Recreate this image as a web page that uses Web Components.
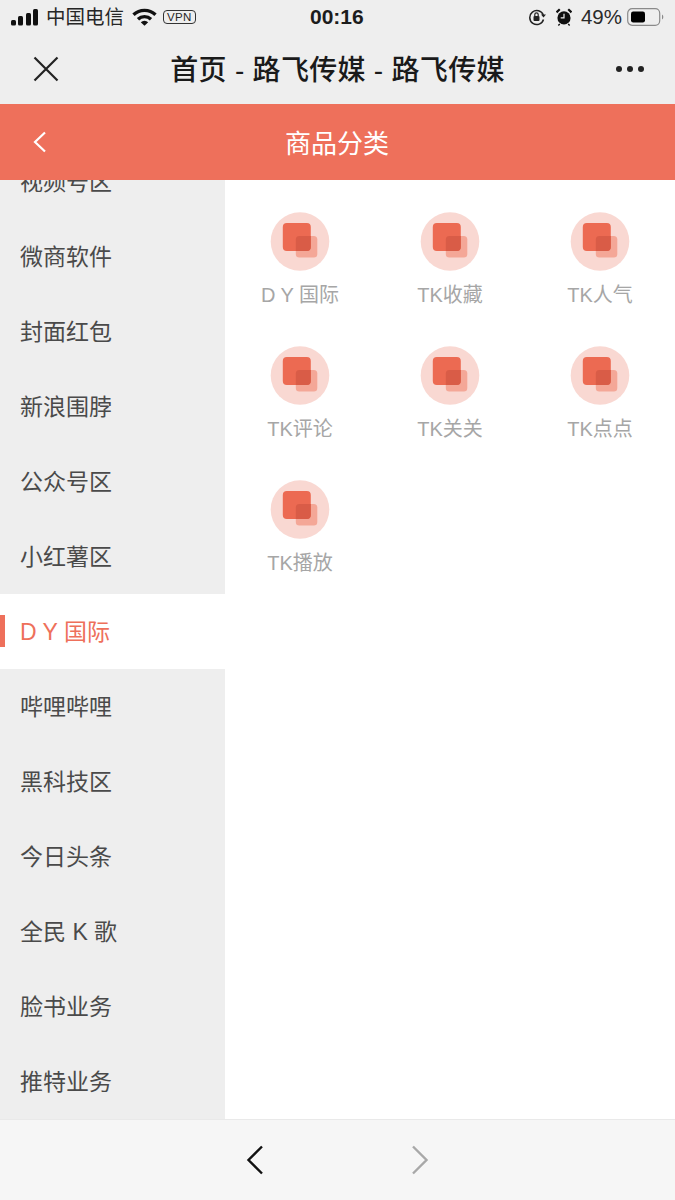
<!DOCTYPE html>
<html lang="zh">
<head>
<meta charset="utf-8">
<title>商品分类</title>
<style>
html, body { margin: 0; padding: 0; height: 100%; }
body { font-family: "Liberation Sans", "Noto Sans CJK SC", sans-serif; background: #fff; overflow: hidden; }
</style>
</head>
<body>
<app-page></app-page>

<script>
class StatusBar extends HTMLElement {
    constructor() {
        super();
        this.attachShadow({mode: 'open'}).innerHTML = `
        <style>
        :host { display: flex; align-items: center; height: 34px; background: #eeeeee; color: #262626; position: relative; font-size: 19.5px; }
        .left { display: flex; align-items: center; padding-left: 11px; flex: 1; }
        .carrier { margin: 0 0 3px 8px; }
        .wifi { margin-left: 8px; }
        .vpn { margin-left: 6px; font-size: 11.5px; line-height: 12px; border: 1px solid #333; border-radius: 4px; padding: 0 3px; height: 12px; letter-spacing: .3px; }
        .time { position: absolute; left: 310px; top: 3px; font-size: 21px; line-height: 28px; font-weight: 700; color: #1c1c1c; }
        .right { display: flex; align-items: center; padding-right: 11px; }
        .pct { font-size: 20.5px; margin: 0 5px 0 9px; color: #2a2a2a; }
        .alarm { margin-left: 10px; }
        </style>
        <div class="left">
            <svg width="27" height="17" viewBox="0 0 27 17"><rect x="0" y="11" width="5" height="5.5" rx="1.5" fill="#111"/><rect x="7" y="7" width="5" height="9.5" rx="1.5" fill="#111"/><rect x="15" y="4" width="5" height="12.5" rx="1.5" fill="#111"/><rect x="22" y="0" width="5" height="16.5" rx="1.5" fill="#111"/></svg>
            <span class="carrier">中国电信</span>
            <svg class="wifi" width="25" height="18" viewBox="0 0 25 18"><path d="M1.5 6.8a16 16 0 0 1 22 0" fill="none" stroke="#111" stroke-width="3.4"/><path d="M6 11.2a9.5 9.5 0 0 1 13 0" fill="none" stroke="#111" stroke-width="3.4"/><path d="M8.8 14.2a5.2 5.2 0 0 1 7.4 0L12.5 17.8z" fill="#111"/></svg>
            <span class="vpn">VPN</span>
        </div>
        <span class="time">00:16</span>
        <div class="right">
            <svg width="18" height="18" viewBox="0 0 18 18"><path d="M15.3 7A7 7 0 1 0 15.5 11.5" fill="none" stroke="#222" stroke-width="1.5"/><path d="M13 6.5h5l-2.5 3z" fill="#222"/><rect x="5.5" y="8" width="6" height="5" rx="1" fill="#222"/><path d="M6.8 8V6.6a1.7 1.7 0 0 1 3.4 0V8" fill="none" stroke="#222" stroke-width="1.2"/></svg>
            <svg class="alarm" width="16" height="18" viewBox="0 0 17 18"><circle cx="8.5" cy="10" r="7" fill="#111"/><path d="M8.5 5.5V10H5" fill="none" stroke="#eee" stroke-width="1.3"/><path d="M0.5 4L4 .8M16.5 4L13 .8" stroke="#111" stroke-width="2.4"/><path d="M4 16.5l-1.5 1.5M13 16.5l1.5 1.5" stroke="#111" stroke-width="1.5"/></svg>
            <span class="pct">49%</span>
            <svg width="37" height="18" viewBox="0 0 37 18"><rect x=".7" y=".7" width="32" height="16.6" rx="4.5" fill="none" stroke="#8a8a8a" stroke-width="1.2"/><rect x="4" y="3.5" width="14" height="11" rx="2.2" fill="#000"/><path d="M35 6.5a3 3 0 0 1 0 5z" fill="#8a8a8a"/></svg>
        </div>`;
    }
}

class NavBar extends HTMLElement {
    constructor() {
        super();
        this.attachShadow({mode: 'open'}).innerHTML = `
        <style>
        :host { display: grid; grid-template-columns: 92px 1fr 92px; align-items: center; height: 70px; background: #eeeeee; }
        .close { padding-left: 33px; display: flex; }
        .title { text-align: center; font-size: 28px; font-weight: 500; color: #1a1a1a; white-space: nowrap; letter-spacing: .3px; padding-bottom: 3px; }
        .more { display: flex; justify-content: flex-end; padding-right: 30px; }
        </style>
        <div class="close"><svg width="26" height="26" viewBox="0 0 26 26"><path d="M1.5 1.5l23 23M24.5 1.5l-23 23" stroke="#222" stroke-width="2.2" fill="none"/></svg></div>
        <div class="title"><slot></slot></div>
        <div class="more"><svg width="30" height="8" viewBox="0 0 30 8"><circle cx="4" cy="4" r="3" fill="#222"/><circle cx="15" cy="4" r="3" fill="#222"/><circle cx="26" cy="4" r="3" fill="#222"/></svg></div>`;
    }
}

class PageHeader extends HTMLElement {
    constructor() {
        super();
        this.attachShadow({mode: 'open'}).innerHTML = `
        <style>
        :host { display: grid; grid-template-columns: 80px 1fr 80px; align-items: center; height: 76px; background: #ee705b; color: #fff; font-size: 26px; position: relative; z-index: 2; }
        .back { padding-left: 33px; display: flex; }
        .title { text-align: center; padding: 0 1px 2px 0; }
        </style>
        <div class="back"><svg width="14" height="22" viewBox="0 0 14 22"><path d="M12 1.5L2 11l10 9.5" fill="none" stroke="#fff" stroke-width="2.2"/></svg></div>
        <div class="title"><slot></slot></div>`;
    }
}

class SideItem extends HTMLElement {
    constructor() {
        super();
        this.attachShadow({mode: 'open'}).innerHTML = `
        <style>
        :host { display: flex; align-items: center; height: 75px; padding: 0 0 4px 20px; font-size: 23px; color: #4a4a4a; white-space: pre; position: relative; box-sizing: border-box; }
        :host([active]) { background: #fff; color: #ee705b; }
        :host([active])::before { content: ""; position: absolute; left: 0; top: 21px; width: 5px; height: 32px; background: #ee705b; }
        </style>
        <slot></slot>`;
    }
}

class SideMenu extends HTMLElement {
    constructor() {
        super();
        this.attachShadow({mode: 'open'}).innerHTML = `
        <style>
        :host { display: block; width: 225px; background: #eeeeee; overflow: hidden; }
        .list { margin-top: -36px; }
        </style>
        <div class="list"><slot></slot></div>`;
    }
}

class CategoryCell extends HTMLElement {
    constructor() {
        super();
        this.attachShadow({mode: 'open'}).innerHTML = `
        <style>
        :host { display: flex; flex-direction: column; align-items: center; height: 134px; font-size: 20px; color: #a6a6a6; white-space: pre; }
        .ball { width: 60px; height: 60px; display: block; }
        .name { margin-top: 8px; line-height: 30px; }
        </style>
        <svg class="ball" viewBox="0 0 60 60">
            <circle cx="30" cy="29.5" r="29.3" fill="#f9d8d2"/>
            <rect x="25.8" y="24" width="21.5" height="21.5" rx="3.5" fill="#f4a797"/>
            <rect x="12.8" y="11" width="28" height="28" rx="4" fill="#ec6a52"/>
            <path d="M29.3 24H40.8V35a4 4 0 0 1-4 4H25.8V27.5a3.5 3.5 0 0 1 3.5-3.5z" fill="#d95c47"/>
        </svg>
        <span class="name"><slot></slot></span>`;
    }
}

class CategoryGrid extends HTMLElement {
    constructor() {
        super();
        this.attachShadow({mode: 'open'}).innerHTML = `
        <style>
        :host { display: grid; grid-template-columns: repeat(3, 150px); grid-auto-rows: 134px; align-content: start; flex: 1; background: #fff; padding-top: 32px; box-sizing: border-box; }
        </style>
        <slot></slot>`;
    }
}

class BottomBar extends HTMLElement {
    constructor() {
        super();
        this.attachShadow({mode: 'open'}).innerHTML = `
        <style>
        :host { display: flex; justify-content: center; align-items: center; gap: 147px; height: 81px; background: #f6f6f6; border-top: 1px solid #e9e9e9; box-sizing: border-box; }
        svg { display: block; }
        </style>
        <svg width="18" height="30" viewBox="0 0 18 30"><path d="M16 1.5L2.5 15 16 28.5" fill="none" stroke="#111" stroke-width="2.4"/></svg>
        <svg width="18" height="30" viewBox="0 0 18 30"><path d="M2 1.5L15.5 15 2 28.5" fill="none" stroke="#a8a8a8" stroke-width="2.4"/></svg>`;
    }
}

class AppPage extends HTMLElement {
    constructor() {
        super();
        this.attachShadow({mode: 'open'}).innerHTML = `
        <style>
        :host { display: flex; flex-direction: column; width: 675px; height: 1200px; overflow: hidden; }
        .main { display: flex; height: 939px; }
        </style>
        <status-bar></status-bar>
        <nav-bar>首页 - 路飞传媒 - 路飞传媒</nav-bar>
        <page-header>商品分类</page-header>
        <div class="main">
            <side-menu>
                <side-item>视频号区</side-item>
                <side-item>微商软件</side-item>
                <side-item>封面红包</side-item>
                <side-item>新浪围脖</side-item>
                <side-item>公众号区</side-item>
                <side-item>小红薯区</side-item>
                <side-item active>D Y 国际</side-item>
                <side-item>哔哩哔哩</side-item>
                <side-item>黑科技区</side-item>
                <side-item>今日头条</side-item>
                <side-item>全民 K 歌</side-item>
                <side-item>脸书业务</side-item>
                <side-item>推特业务</side-item>
            </side-menu>
            <category-grid>
                <category-cell>D Y 国际</category-cell>
                <category-cell>TK收藏</category-cell>
                <category-cell>TK人气</category-cell>
                <category-cell>TK评论</category-cell>
                <category-cell>TK关关</category-cell>
                <category-cell>TK点点</category-cell>
                <category-cell>TK播放</category-cell>
            </category-grid>
        </div>
        <bottom-bar></bottom-bar>`;
    }
}

customElements.define('status-bar', StatusBar);
customElements.define('nav-bar', NavBar);
customElements.define('page-header', PageHeader);
customElements.define('side-item', SideItem);
customElements.define('side-menu', SideMenu);
customElements.define('category-cell', CategoryCell);
customElements.define('category-grid', CategoryGrid);
customElements.define('bottom-bar', BottomBar);
customElements.define('app-page', AppPage);
</script>
</body>
</html>
